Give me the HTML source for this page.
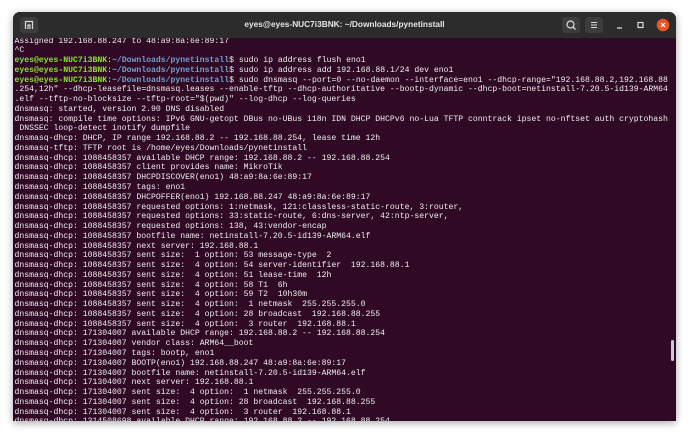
<!DOCTYPE html>
<html><head><meta charset="utf-8"><style>
html,body{margin:0;padding:0;width:690px;height:435px;background:#fff;overflow:hidden}
.win{position:absolute;left:13px;top:12px;width:663px;height:409px;border-radius:7px 7px 0 0;overflow:hidden;box-shadow:0 2px 8px rgba(0,0,0,.35);background:#300a24}
.tb{position:absolute;left:0;top:0;width:663px;height:26px;background:#2c2c2c;color:#e6e6e6;font:bold 8.3px "Liberation Sans",sans-serif;text-align:center;line-height:25px;z-index:2}
.btn{position:absolute;top:5px;width:18px;height:16px;background:#3c3c3c;border-radius:3px}
.term{position:absolute;left:1.5px;top:24.5px;font-family:"Liberation Mono",monospace;font-size:8.13px;line-height:9.77px;color:#ececec;white-space:pre}
.g{color:#8ae234;font-weight:bold}.b{color:#729fcf;font-weight:bold}
.sb{position:absolute;left:658px;top:328px;width:3px;height:21px;background:#ccc;border-radius:2px}
</style></head><body>
<div class="win">
<div class="tb">eyes@eyes-NUC7i3BNK: ~/Downloads/pynetinstall
<div class="btn" style="left:7px;"><svg width="18" height="16"><path d="M5.5 12V4.5h7V12M8 12V8h2v4" fill="none" stroke="#ddd" stroke-width="1.2"/></svg></div>
<div class="btn" style="left:549px;"><svg width="18" height="16"><circle cx="8.5" cy="7.5" r="3.5" fill="none" stroke="#ddd" stroke-width="1.2"/><path d="M11 10l2.5 2.5" stroke="#ddd" stroke-width="1.3"/></svg></div>
<div class="btn" style="left:572px;"><svg width="18" height="16"><path d="M6 5.5h6M6 8h6M6 10.5h6" stroke="#ddd" stroke-width="1.1"/></svg></div>
<svg style="position:absolute;left:600px;top:6px" width="60" height="14"><path d="M4 10h5" stroke="#ddd" stroke-width="1.2"/><rect x="25" y="4.5" width="5" height="5" fill="none" stroke="#ddd" stroke-width="1.2"/><circle cx="50" cy="7" r="6.3" fill="#e95420"/><path d="M48 5l4 4M52 5l-4 4" stroke="#fff" stroke-width="1.2"/></svg>
</div>
<div class="term">Assigned 192.168.88.247 to 48:a9:8a:6e:89:17
^C
<span class="g">eyes@eyes-NUC7i3BNK</span>:<span class="b">~/Downloads/pynetinstall</span>$ sudo ip address flush eno1
<span class="g">eyes@eyes-NUC7i3BNK</span>:<span class="b">~/Downloads/pynetinstall</span>$ sudo ip address add 192.168.88.1/24 dev eno1
<span class="g">eyes@eyes-NUC7i3BNK</span>:<span class="b">~/Downloads/pynetinstall</span>$ sudo dnsmasq --port=0 --no-daemon --interface=eno1 --dhcp-range="192.168.88.2,192.168.88
.254,12h" --dhcp-leasefile=dnsmasq.leases --enable-tftp --dhcp-authoritative --bootp-dynamic --dhcp-boot=netinstall-7.20.5-id139-ARM64
.elf --tftp-no-blocksize --tftp-root="$(pwd)" --log-dhcp --log-queries
dnsmasq: started, version 2.90 DNS disabled
dnsmasq: compile time options: IPv6 GNU-getopt DBus no-UBus i18n IDN DHCP DHCPv6 no-Lua TFTP conntrack ipset no-nftset auth cryptohash
 DNSSEC loop-detect inotify dumpfile
dnsmasq-dhcp: DHCP, IP range 192.168.88.2 -- 192.168.88.254, lease time 12h
dnsmasq-tftp: TFTP root is /home/eyes/Downloads/pynetinstall
dnsmasq-dhcp: 1088458357 available DHCP range: 192.168.88.2 -- 192.168.88.254
dnsmasq-dhcp: 1088458357 client provides name: MikroTik
dnsmasq-dhcp: 1088458357 DHCPDISCOVER(eno1) 48:a9:8a:6e:89:17
dnsmasq-dhcp: 1088458357 tags: eno1
dnsmasq-dhcp: 1088458357 DHCPOFFER(eno1) 192.168.88.247 48:a9:8a:6e:89:17
dnsmasq-dhcp: 1088458357 requested options: 1:netmask, 121:classless-static-route, 3:router,
dnsmasq-dhcp: 1088458357 requested options: 33:static-route, 6:dns-server, 42:ntp-server,
dnsmasq-dhcp: 1088458357 requested options: 138, 43:vendor-encap
dnsmasq-dhcp: 1088458357 bootfile name: netinstall-7.20.5-id139-ARM64.elf
dnsmasq-dhcp: 1088458357 next server: 192.168.88.1
dnsmasq-dhcp: 1088458357 sent size:  1 option: 53 message-type  2
dnsmasq-dhcp: 1088458357 sent size:  4 option: 54 server-identifier  192.168.88.1
dnsmasq-dhcp: 1088458357 sent size:  4 option: 51 lease-time  12h
dnsmasq-dhcp: 1088458357 sent size:  4 option: 58 T1  6h
dnsmasq-dhcp: 1088458357 sent size:  4 option: 59 T2  10h30m
dnsmasq-dhcp: 1088458357 sent size:  4 option:  1 netmask  255.255.255.0
dnsmasq-dhcp: 1088458357 sent size:  4 option: 28 broadcast  192.168.88.255
dnsmasq-dhcp: 1088458357 sent size:  4 option:  3 router  192.168.88.1
dnsmasq-dhcp: 171304007 available DHCP range: 192.168.88.2 -- 192.168.88.254
dnsmasq-dhcp: 171304007 vendor class: ARM64__boot
dnsmasq-dhcp: 171304007 tags: bootp, eno1
dnsmasq-dhcp: 171304007 BOOTP(eno1) 192.168.88.247 48:a9:8a:6e:89:17
dnsmasq-dhcp: 171304007 bootfile name: netinstall-7.20.5-id139-ARM64.elf
dnsmasq-dhcp: 171304007 next server: 192.168.88.1
dnsmasq-dhcp: 171304007 sent size:  4 option:  1 netmask  255.255.255.0
dnsmasq-dhcp: 171304007 sent size:  4 option: 28 broadcast  192.168.88.255
dnsmasq-dhcp: 171304007 sent size:  4 option:  3 router  192.168.88.1
dnsmasq-dhcp: 1314508698 available DHCP range: 192.168.88.2 -- 192.168.88.254</div>
<div class="sb"></div>
</div>
</body></html>
